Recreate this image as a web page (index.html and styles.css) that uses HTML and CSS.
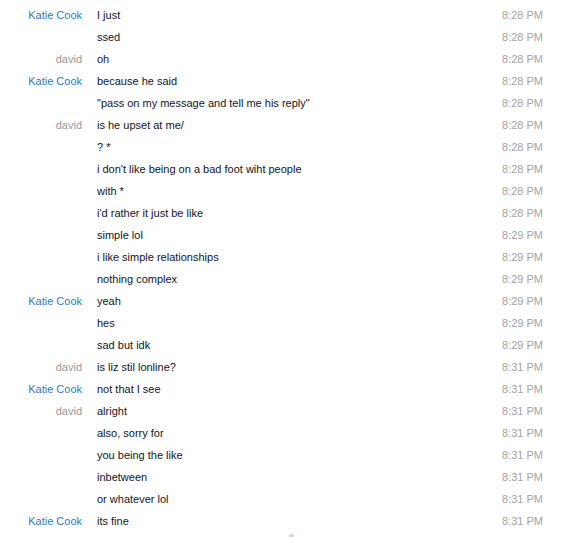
FILE: index.html
```html
<!DOCTYPE html>
<html>
<head>
<meta charset="utf-8">
<link rel="stylesheet" href="styles.css">
</head>
<body>
<div class="log">
  <div class="row"><span class="name katie">Katie Cook</span><span class="msg">I just</span><span class="time">8:28 PM</span></div>
  <div class="row"><span class="name"></span><span class="msg">ssed</span><span class="time">8:28 PM</span></div>
  <div class="row"><span class="name david">david</span><span class="msg">oh</span><span class="time">8:28 PM</span></div>
  <div class="row"><span class="name katie">Katie Cook</span><span class="msg">because he said</span><span class="time">8:28 PM</span></div>
  <div class="row"><span class="name"></span><span class="msg">"pass on my message and tell me his reply"</span><span class="time">8:28 PM</span></div>
  <div class="row"><span class="name david">david</span><span class="msg">is he upset at me/</span><span class="time">8:28 PM</span></div>
  <div class="row"><span class="name"></span><span class="msg">? *</span><span class="time">8:28 PM</span></div>
  <div class="row"><span class="name"></span><span class="msg">i don't like being on a bad foot wiht people</span><span class="time">8:28 PM</span></div>
  <div class="row"><span class="name"></span><span class="msg">with *</span><span class="time">8:28 PM</span></div>
  <div class="row"><span class="name"></span><span class="msg">i'd rather it just be like</span><span class="time">8:28 PM</span></div>
  <div class="row"><span class="name"></span><span class="msg">simple lol</span><span class="time">8:29 PM</span></div>
  <div class="row"><span class="name"></span><span class="msg">i like simple relationships</span><span class="time">8:29 PM</span></div>
  <div class="row"><span class="name"></span><span class="msg">nothing complex</span><span class="time">8:29 PM</span></div>
  <div class="row"><span class="name katie">Katie Cook</span><span class="msg">yeah</span><span class="time">8:29 PM</span></div>
  <div class="row"><span class="name"></span><span class="msg">hes</span><span class="time">8:29 PM</span></div>
  <div class="row"><span class="name"></span><span class="msg">sad but idk</span><span class="time">8:29 PM</span></div>
  <div class="row"><span class="name david">david</span><span class="msg">is liz stil lonline?</span><span class="time">8:31 PM</span></div>
  <div class="row"><span class="name katie">Katie Cook</span><span class="msg">not that I see</span><span class="time">8:31 PM</span></div>
  <div class="row"><span class="name david">david</span><span class="msg">alright</span><span class="time">8:31 PM</span></div>
  <div class="row"><span class="name"></span><span class="msg">also, sorry for</span><span class="time">8:31 PM</span></div>
  <div class="row"><span class="name"></span><span class="msg">you being the like</span><span class="time">8:31 PM</span></div>
  <div class="row"><span class="name"></span><span class="msg">inbetween</span><span class="time">8:31 PM</span></div>
  <div class="row"><span class="name"></span><span class="msg">or whatever lol</span><span class="time">8:31 PM</span></div>
  <div class="row"><span class="name katie">Katie Cook</span><span class="msg">its fine</span><span class="time">8:31 PM</span></div>
  <div class="more"><span class="caret"></span></div>
</div>
</body>
</html>
```
FILE: styles.css
```css
html, body {
  margin: 0;
  padding: 0;
  background: #ffffff;
}
body {
  width: 586px;
  height: 537px;
  overflow: hidden;
  font-family: "Liberation Sans", Arial, sans-serif;
  font-size: 11px;
}
.log {
  padding: 4px 43px 0 0;
}
.row {
  display: grid;
  grid-template-columns: 82px 1fr auto;
  column-gap: 15px;
  height: 22px;
  align-items: center;
  line-height: 22px;
}
.name {
  text-align: right;
  white-space: nowrap;
}
.katie { color: #2a7cc8; }
.david { color: #999999; }
.msg { color: #14141e; white-space: nowrap; }
.time { color: #a3a3a3; white-space: nowrap; text-align: right; }
.more {
  display: flex;
  justify-content: center;
  padding-left: 40px;
  height: 5px;
}
.caret {
  display: block;
  margin-top: 2px;
  width: 5px;
  height: 3px;
  background: #c7d6e8;
  border-radius: 2px 2px 0 0;
}
```
